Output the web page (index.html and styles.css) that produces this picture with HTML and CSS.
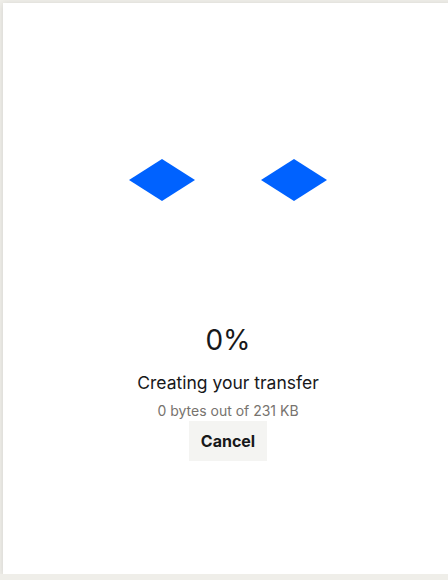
FILE: index.html
```html
<!DOCTYPE html>
<html>

<head>
<link rel="stylesheet" href="styles.css">
</head>

<body>
  <div class="card">
    <div class="loader">
      <svg class="diamond" width="66" height="42" viewBox="0 0 66 42"><polygon points="33,0 66,21 33,42 0,21"/></svg>
      <svg class="diamond" width="66" height="42" viewBox="0 0 66 42"><polygon points="33,0 66,21 33,42 0,21"/></svg>
    </div>
    <div class="percent">0%</div>
    <div class="status">Creating your transfer</div>
    <div class="progress">0 bytes out of 231 KB</div>
    <button class="cancel">Cancel</button>
  </div>
</body>
</html>
```

FILE: styles.css
```css
/* page background behind the upload card */
body {
  margin: 0;
  background: #efeee9;
  overflow: hidden;
  font-family: Inter, "Liberation Sans", sans-serif;
  color: #17181a;
}

* {
  box-sizing: border-box;
}

/* the white card, wider than the window on the right */
.card {
  width: 450px;
  height: 571px;
  margin: 3px 0 0 3px;
  background: #fff;
  box-shadow: 0 1px 6px rgba(0, 0, 0, 0.12);
  display: flex;
  flex-direction: column;
  align-items: center;
}

/* the two blue diamonds */
.loader {
  display: flex;
  gap: 66px;
  margin-top: 156px;
}

.diamond {
  display: block;
  fill: #0062ff;
}

.percent {
  margin-top: 121px;
  font-size: 28px;
  line-height: 36px;
  font-weight: 400;
}

.status {
  margin-top: 13px;
  font-size: 17.5px;
  line-height: 24px;
}

.progress {
  margin-top: 6px;
  font-size: 14px;
  line-height: 20px;
  color: #77736e;
}

/* grey cancel button */
.cancel {
  margin-top: 0;
  width: 78px;
  height: 40px;
  border: none;
  background: #f4f4f2;
  font-family: Inter, "Liberation Sans", sans-serif;
  font-size: 16px;
  font-weight: 700;
  color: #17181a;
  cursor: pointer;
}
```
